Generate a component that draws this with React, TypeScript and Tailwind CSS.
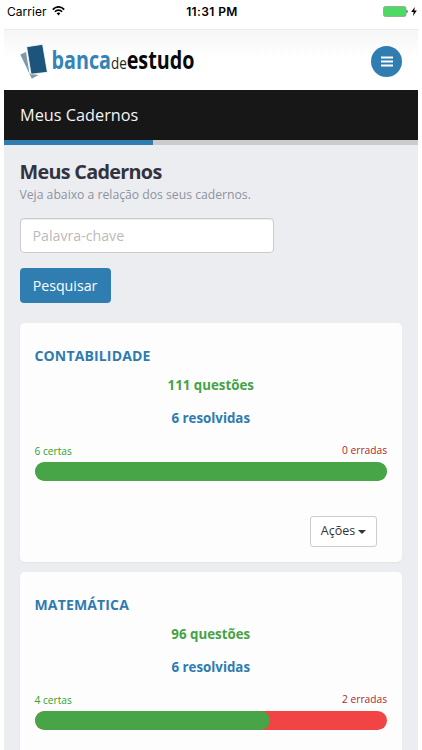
import { useState } from 'react'

const notebooks = [
  { name: 'CONTABILIDADE', questions: 111, right: 6, wrong: 0 },
  { name: 'MATEMÁTICA', questions: 96, right: 4, wrong: 2 }
]

function StatusBar() {
  return (
    <div className="grid grid-cols-3 items-center h-[29px] pb-[6px] pl-[7px] pr-[5px] bg-white text-black font-['Inter',sans-serif]">
      <div className="flex items-center gap-[5px] text-[12px] tracking-[0.05px]">
        <span>Carrier</span>
        <svg className="w-[13px] h-[10px] -mt-[2px]" viewBox="0 0 13 10" fill="none" stroke="currentColor" strokeWidth="1.7">
          <path d="M.8 3.6C4-.1 9-.1 12.2 3.6" />
          <path d="M2.9 5.8C4.9 3.5 8.1 3.5 10.1 5.8" />
          <path d="M4.6 7.3C5.6 6.2 7.4 6.2 8.4 7.3L6.5 9.4Z" fill="currentColor" stroke="none" />
        </svg>
      </div>
      <div className="text-center text-[12px] font-semibold tracking-[0.4px] whitespace-nowrap">11:31 PM</div>
      <div className="flex items-center justify-end gap-[3px] pb-[1px]">
        <svg className="w-[25px] h-[11px]" viewBox="0 0 25 11">
          <rect x=".5" y=".5" width="22.5" height="10" rx="1.8" fill="#4cd964" stroke="#8fa393" strokeWidth=".8" />
          <path d="M23.5 3.8C25.2 4.2 25.2 6.8 23.5 7.2Z" fill="#555" />
        </svg>
        <svg className="w-[6px] h-[9px]" viewBox="0 0 6 9" fill="currentColor">
          <path d="M3.8 0L.2 5H2.7L1.9 9L5.9 3.6H3.3Z" />
        </svg>
      </div>
    </div>
  )
}

function Logo() {
  return (
    <svg className="w-[190px] h-[48px]" viewBox="0 -4 190 48" fontFamily="'Open Sans', sans-serif">
      <path d="M.3 12.5L6 10L9.5 31.5L18.5 33L11.8 36.8Z" fill="#7d9aab" />
      <path d="M6.6 4.8L22.6 2.3L27.4 30.3L11 32.2Z" fill="#1d547b" stroke="#fff" strokeWidth=".8" />
      <text transform="translate(31.5 27.3) scale(.79 1)" fontSize="25" fontWeight="700" fill="#3484b8">
        banca
        <tspan fontSize="17" fontWeight="400" fill="#222">de</tspan>
        <tspan fill="#080808">estudo</tspan>
      </text>
    </svg>
  )
}

function NotebookCard({ notebook }: { notebook: (typeof notebooks)[number] }) {
  const solved = notebook.right + notebook.wrong

  return (
    <div className="h-[239.5px] shrink-0 rounded-[5px] bg-[#fdfdfd] px-[15px] pt-[20px] shadow-[0_1px_2px_rgba(0,0,0,0.04)]">
      <h3 className="h-[26px] text-[14px] leading-[25px] font-bold tracking-[0.15px] text-[#2f7bb0]">{notebook.name}</h3>
      <div className="text-center text-[13.3px] font-bold">
        <p className="h-[33px] leading-[32px] text-[#45a345]">{notebook.questions} questões</p>
        <p className="h-[33px] leading-[32px] text-[#2f7bb0]">{solved} resolvidas</p>
      </div>

      <div className="flex justify-between h-[27px] pt-[6px] text-[10.2px] leading-[18px]">
        <span className="pt-px text-[#2fa32f]">{notebook.right} certas</span>
        <span className="text-[#a82a2a]">{notebook.wrong} erradas</span>
      </div>
      <div className={`h-[19px] rounded-full overflow-hidden ${notebook.wrong > 0 ? 'bg-[#f24444]' : 'bg-[#47a447]'}`}>
        <div className="h-full rounded-full bg-[#47a447]" style={{ width: `${(notebook.right / solved) * 100}%` }}></div>
      </div>

      <div className="flex justify-end mt-[35px] pr-[10px]">
        <button className="flex items-center justify-center gap-[3px] w-[67px] h-[31px] rounded-[3px] border border-[#ccc] bg-white text-[12.5px] text-[#333]">
          Ações
          <svg className="w-[8px] h-[4px] mt-[2px]" viewBox="0 0 8 4" fill="currentColor">
            <path d="M0 0H8L4 4Z" />
          </svg>
        </button>
      </div>
    </div>
  )
}

export default function App() {
  const [keyword, setKeyword] = useState('')

  return (
    <div className="h-[750px] w-[422px] overflow-hidden bg-white font-['Open_Sans',sans-serif]">
      <StatusBar />

      <div className="w-[414px] mx-auto">
        {/* Header */}
        <header className="flex items-center justify-between h-[61px] px-[16px] pt-[3px] border-t border-[#ececec] bg-gradient-to-b from-[#f6f6f6] to-white to-50%">
          <Logo />
          <button className="flex items-center justify-center w-[31px] h-[31px] rounded-full bg-[#2f7db1]">
            <svg className="w-[12px] h-[11px]" viewBox="0 0 12 11" fill="#fff">
              <path d="M0 .4H12V2.4H0ZM0 4.5H12V6.5H0ZM0 8.6H12V10.6H0Z" />
            </svg>
          </button>
        </header>

        {/* Page title */}
        <div className="h-[50px] pl-[16px] bg-[#171717] text-[16.3px] leading-[50px] text-[#f4f4f4]">Meus Cadernos</div>
        <div className="h-[5px] bg-[#ccc]">
          <div className="w-[149px] h-full bg-[#2f7db1]"></div>
        </div>

        <main className="h-[605px] pl-[15.5px] pr-[16px] pt-[13px] bg-[#ecedf0]">
          <h2 className="h-[28px] text-[19.8px] leading-[27px] font-bold tracking-[-0.7px] text-[#33333f]">Meus Cadernos</h2>
          <p className="h-[18px] text-[12.2px] leading-[18px] text-[#8d93a1]">Veja abaixo a relação dos seus cadernos.</p>

          <input
            type="text"
            placeholder="Palavra-chave"
            value={keyword}
            onChange={(e) => setKeyword(e.target.value)}
            className="block w-[254px] h-[35px] mt-[14px] px-[12px] rounded-[4px] border border-[#ccc] bg-white text-[14.2px] placeholder:text-[#bbb] shadow-[inset_0_1px_1px_rgba(0,0,0,0.075)]"
          />
          <button className="block w-[91px] h-[35px] mt-[15px] rounded-[4px] bg-[#2f7db1] text-[14.2px] text-white">
            Pesquisar
          </button>

          <div className="flex flex-col gap-[10px] mt-[19.5px]">
            {notebooks.map((notebook) => (
              <NotebookCard key={notebook.name} notebook={notebook} />
            ))}
          </div>
        </main>
      </div>
    </div>
  )
}
